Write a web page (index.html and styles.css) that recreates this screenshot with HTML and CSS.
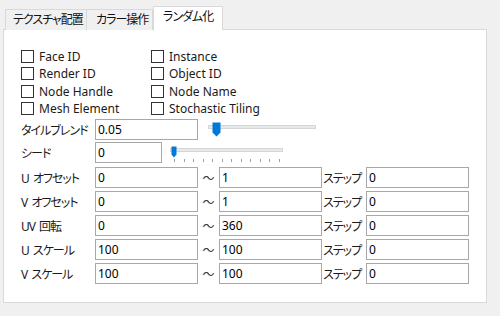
FILE: index.html
```html
<!DOCTYPE html>
<html lang="ja">
<head>
  <meta charset="UTF-8">
  <title>ランダム化</title>
  <link rel="stylesheet" href="styles.css">
</head>
<body>
  <div class="tabs">
    <div class="tab">テクスチャ配置</div>
    <div class="tab">カラー操作</div>
    <div class="tab active">ランダム化</div>
  </div>

  <div class="panel">
    <div class="checks">
      <label class="check"><span class="box"></span>Face ID</label>
      <label class="check"><span class="box"></span>Instance</label>
      <label class="check"><span class="box"></span>Render ID</label>
      <label class="check"><span class="box"></span>Object ID</label>
      <label class="check"><span class="box"></span>Node Handle</label>
      <label class="check"><span class="box"></span>Node Name</label>
      <label class="check"><span class="box"></span>Mesh Element</label>
      <label class="check"><span class="box"></span>Stochastic Tiling</label>
    </div>

    <div class="row blend">
      <span class="label">タイルブレンド</span>
      <div class="field wide">0.05</div>
      <div class="slider big">
        <div class="track"></div>
        <svg class="thumb" width="9" height="15" viewBox="0 0 9 15"><path d="M0.5 0.5h8v10l-4 4l-4 -4z" fill="#0078d7"/></svg>
      </div>
    </div>

    <div class="row seed">
      <span class="label">シード</span>
      <div class="field short">0</div>
      <div class="slider small">
        <div class="track"></div>
        <svg class="thumb" width="6" height="12" viewBox="0 0 6 12"><path d="M0.5 0.5h5v8l-2.5 3l-2.5 -3z" fill="#0078d7"/></svg>
        <div class="ticks">
          <i></i><i></i><i></i><i></i><i></i><i></i><i></i><i></i><i></i><i></i><i></i><i></i>
        </div>
      </div>
    </div>

    <div class="ranges">
      <div class="row range">
        <span class="label">U オフセット</span>
        <div class="field wide">0</div>
        <span class="tilde">～</span>
        <div class="field wide">1</div>
        <span class="step">ステップ</span>
        <div class="field wide">0</div>
      </div>
      <div class="row range">
        <span class="label">V オフセット</span>
        <div class="field wide">0</div>
        <span class="tilde">～</span>
        <div class="field wide">1</div>
        <span class="step">ステップ</span>
        <div class="field wide">0</div>
      </div>
      <div class="row range">
        <span class="label">UV 回転</span>
        <div class="field wide">0</div>
        <span class="tilde">～</span>
        <div class="field wide">360</div>
        <span class="step">ステップ</span>
        <div class="field wide">0</div>
      </div>
      <div class="row range">
        <span class="label">U スケール</span>
        <div class="field wide">100</div>
        <span class="tilde">～</span>
        <div class="field wide">100</div>
        <span class="step">ステップ</span>
        <div class="field wide">0</div>
      </div>
      <div class="row range">
        <span class="label">V スケール</span>
        <div class="field wide">100</div>
        <span class="tilde">～</span>
        <div class="field wide">100</div>
        <span class="step">ステップ</span>
        <div class="field wide">0</div>
      </div>
    </div>
  </div>
</body>
</html>
```

FILE: styles.css
```css
* {
  margin: 0;
  padding: 0;
  box-sizing: border-box;
}

body {
  background-color: #f0f0f0;
  color: #000;
  font-family: 'Noto Sans', 'Noto Sans CJK JP', sans-serif;
  font-size: 12px;
  font-feature-settings: "palt";
  width: 500px;
  height: 316px;
  overflow: hidden;
}

.tabs {
  display: flex;
  align-items: flex-end;
  height: 30px;
  padding-left: 5px;
  position: relative;
  z-index: 1;
}

.tab {
  height: 21px;
  padding: 0 0 0 7px;
  border: 1px solid #d9d9d9;
  border-bottom: none;
  background-color: #f0f0f0;
  line-height: 19px;
  letter-spacing: -1px;
  white-space: nowrap;
  color: #111;
}

.tab + .tab {
  border-left: none;
}

.tab:nth-child(1) {
  width: 82px;
}

.tab:nth-child(2) {
  width: 66px;
  padding-left: 9px;
}

.tab.active {
  width: 70px;
  height: 24px;
  padding-left: 9px;
  border-left: 1px solid #d9d9d9;
  background-color: #fff;
  line-height: 19px;
}

.panel {
  margin-top: -1px;
  margin-left: 3px;
  width: 484px;
  height: 274px;
  border: 1px solid #d9d9d9;
  background-color: #fff;
  padding: 18px 0 0 17px;
}

.checks {
  display: grid;
  grid-template-columns: 130px auto;
  grid-auto-rows: 17.3px;
}

.check {
  display: flex;
  align-items: center;
  white-space: nowrap;
  color: #1a1a1a;
}

.box {
  width: 13px;
  height: 13px;
  border: 1px solid #333;
  background-color: #fff;
  margin-right: 5px;
}

.row {
  display: flex;
  align-items: center;
}

.label {
  width: 74px;
  letter-spacing: -1px;
  word-spacing: 2px;
  white-space: nowrap;
  color: #1a1a1a;
}

.field {
  height: 21px;
  border: 1px solid #a8a8a8;
  padding-left: 2px;
  line-height: 19px;
  background-color: #fff;
}

.wide {
  width: 103px;
}

.short {
  width: 67px;
}

.blend {
  margin-top: 2px;
  height: 21px;
}

.seed {
  margin-top: 2px;
  height: 21px;
}

.slider {
  position: relative;
  height: 21px;
}

.track {
  height: 4px;
  background-color: #e7eaea;
  border: 1px solid #d6d6d6;
}

.big {
  margin-left: 10px;
  width: 108px;
}

.big .track {
  margin-top: 6px;
}

.big .thumb {
  position: absolute;
  left: 4px;
  top: 3px;
}

.small {
  margin-left: 8px;
  width: 113px;
}

.small .track {
  margin-top: 6px;
}

.small .thumb {
  position: absolute;
  left: 1px;
  top: 4px;
}

.ticks {
  display: flex;
  justify-content: space-between;
  margin: 7px 3px 0 4px;
}

.ticks i {
  width: 1px;
  height: 3px;
  background-color: #a0a0a0;
}

.ranges {
  margin-top: 4px;
  display: flex;
  flex-direction: column;
  gap: 3px;
}

.tilde {
  width: 21px;
  text-align: center;
  color: #333;
}

.step {
  width: 44px;
  padding-left: 1px;
  letter-spacing: -1px;
  white-space: nowrap;
  color: #1a1a1a;
}
```
